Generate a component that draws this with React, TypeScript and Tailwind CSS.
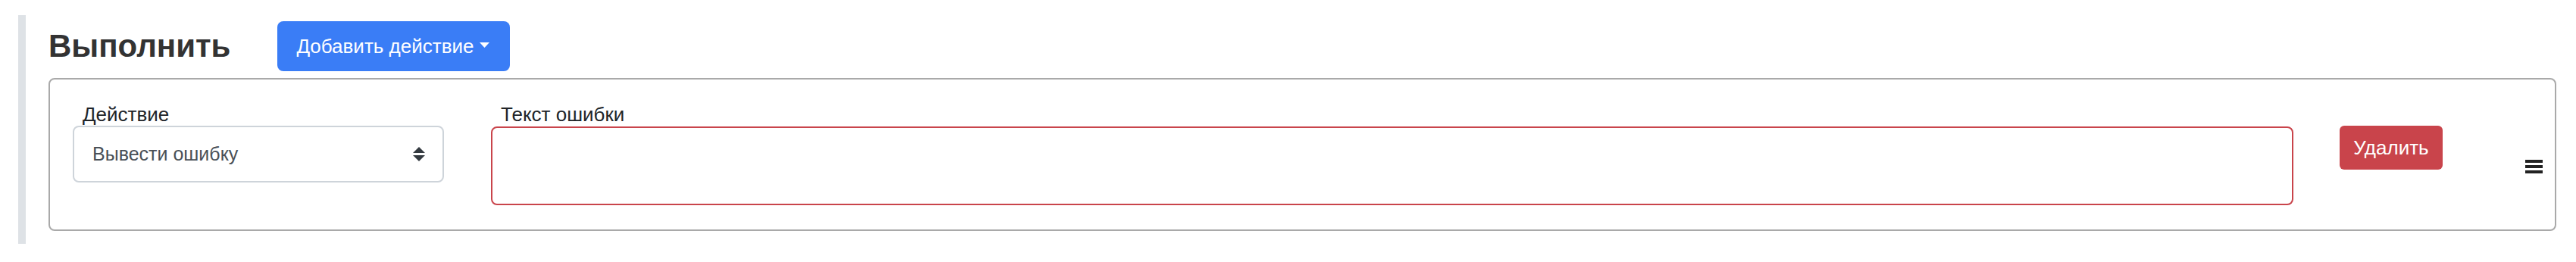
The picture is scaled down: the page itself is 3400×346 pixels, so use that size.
import React from "react";

function SelectArrows() {
  return (
    <svg width="16" height="19" viewBox="0 0 16 19" className="shrink-0">
      <polygon points="0,8 8,0 16,8" fill="#343a40" />
      <polygon points="0,11 16,11 8,19" fill="#343a40" />
    </svg>
  );
}

function Caret() {
  return (
    <svg width="13" height="7" viewBox="0 0 13 7" className="ml-[8px] mb-[4px] shrink-0">
      <polygon points="0,0 13,0 6.5,7" fill="#ffffff" />
    </svg>
  );
}

function ActionRow() {
  return (
    <div className="mt-[9px] flex h-[202px] items-start rounded-[8px] border-2 border-[#a9a9a9] pl-[30px] pr-[16px] pt-[32px]">
      <div className="w-[490px] shrink-0">
        <label className="block h-[29px] pl-[13px] text-[26px] leading-[29px] text-[#212529]">
          Действие
        </label>
        <div className="flex h-[75px] items-center justify-between rounded-[8px] border-2 border-[#ced4da] pl-[24px] pr-[23px] text-[25px] text-[#495057]">
          <span>Вывести ошибку</span>
          <SelectArrows />
        </div>
      </div>

      <div className="ml-[62px] flex-1">
        <label className="block h-[29px] pl-[13px] text-[26px] leading-[29px] text-[#212529]">
          Текст ошибки
        </label>
        <textarea className="mt-[1px] block h-[104px] w-full resize-none rounded-[8px] border-2 border-[#c9444b] outline-none" />
      </div>

      <button className="ml-[61px] mt-[29px] h-[58px] w-[136px] shrink-0 rounded-[6px] bg-[#c9444b] text-[26px] text-white">
        Удалить
      </button>

      <div className="ml-[109px] flex flex-col gap-[3px] self-center pb-[1px]">
        <span className="block h-[4px] w-[23px] bg-[#222222]" />
        <span className="block h-[4px] w-[23px] bg-[#222222]" />
        <span className="block h-[4px] w-[23px] bg-[#222222]" />
      </div>
    </div>
  );
}

export default function App() {
  return (
    <div className="h-[346px] w-full bg-white pt-[20px] font-['Liberation_Sans',Arial,sans-serif]">
      <div className="ml-[24px] mr-[26px] border-l-[10px] border-[#dee2e6] pb-[17px] pl-[30px] pt-[8px]">
        <div className="flex h-[66px] items-center">
          <h3 className="text-[42px] font-bold leading-none text-[#333333]">Выполнить</h3>
          <button className="ml-[62px] flex h-[66px] items-center rounded-[8px] bg-[#3a7df6] pl-[25px] pr-[27px] text-[26px] text-white">
            <span>Добавить действие</span>
            <Caret />
          </button>
        </div>
        <ActionRow />
      </div>
    </div>
  );
}
